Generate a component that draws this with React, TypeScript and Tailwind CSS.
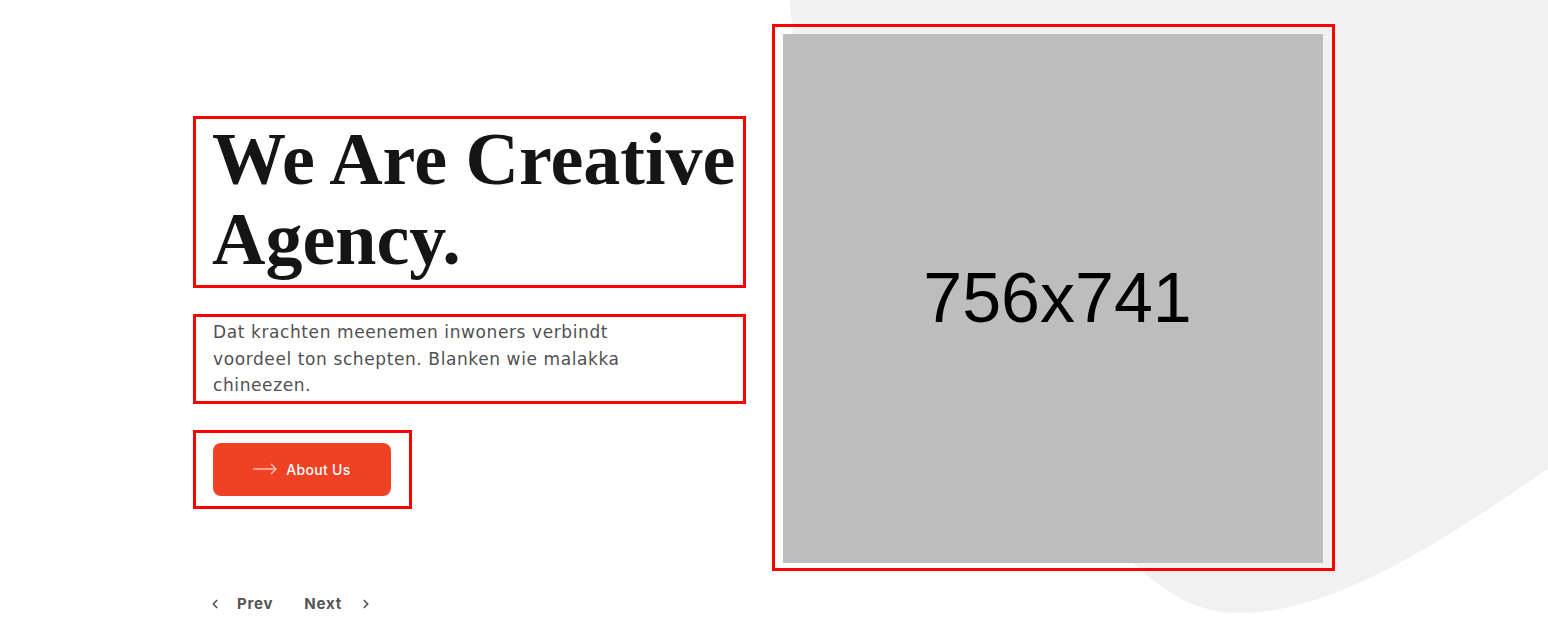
import React from 'react';
import { ChevronLeft, ChevronRight } from 'lucide-react';

const sans = { fontFamily: 'Inter, "Noto Sans", sans-serif' };
const wide = { fontFamily: '"DejaVu Sans", Inter, sans-serif' };

const HeroSlide: React.FC = () => {
  return (
    <div className="relative flex">
      {/* left column */}
      <div className="w-[553px] pt-[92px] flex flex-col">
        <div className="border-[3px] border-[#ff0000] pl-[16px] pb-[6px]">
          <h1
            className="text-[74px] leading-[80px] font-bold text-[#151515]"
            style={{ fontFamily: '"Liberation Serif", serif' }}
          >
            We Are Creative
            <br />
            Agency.
          </h1>
        </div>

        <div className="mt-[26px] border-[3px] border-[#ff0000] pl-[17px] pt-[2px] pb-[2px]">
          <p className="text-[17px] leading-[26.5px] text-[#505050] tracking-[0.6px]" style={wide}>
            Dat krachten meenemen inwoners verbindt
            <br />
            voordeel ton schepten. Blanken wie malakka
            <br />
            chineezen.
          </p>
        </div>

        <div className="mt-[26px] w-[219px] border-[3px] border-[#ff0000] pl-[17px] pt-[10px] pb-[10px]">
          <button
            type="button"
            className="w-[178px] h-[53px] rounded-[8px] bg-[#ef4123] flex items-center justify-center gap-[9px] text-white text-[14px] font-medium tracking-[0.3px]"
            style={sans}
          >
            <svg width="24" height="12" viewBox="0 0 24 12" fill="none" stroke="#ffd9d2" strokeWidth="1.2">
              <path d="M0 6 H23" />
              <path d="M18 1 L23 6 L18 11" />
            </svg>
            About Us
          </button>
        </div>

        <div className="mt-[84px] flex items-center text-[15px] font-bold text-[#555555] tracking-[0.8px]" style={sans}>
          <button type="button" className="flex items-center gap-[15px] pl-[15px]">
            <ChevronLeft size={14} strokeWidth={3} />
            Prev
          </button>
          <button type="button" className="flex items-center gap-[17px] ml-[31px]">
            Next
            <ChevronRight size={14} strokeWidth={3} />
          </button>
        </div>
      </div>

      {/* right column */}
      <div className="ml-[26px] w-[563px] h-[547px] border-[3px] border-[#ff0000] pl-[8px] pt-[7px]">
        <div className="w-[540px] h-[529px] bg-[#bdbdbd] flex items-center justify-center pl-[9px]">
          <span className="text-[70px] text-black" style={{ fontFamily: '"Liberation Sans", Arial, sans-serif' }}>
            756x741
          </span>
        </div>
      </div>
    </div>
  );
};

export default function App() {
  return (
    <div className="relative w-full h-[637px] overflow-hidden bg-white">
      <svg className="absolute inset-0" width="1548" height="637" viewBox="0 0 1548 637">
        <path
          d="M789 -20 C795 250 1000 450 1133 563 C1170 597 1200 613 1240 613 C1330 613 1440 545 1560 460 L1560 -20 Z"
          fill="#f1f1f1"
        />
      </svg>
      <div className="relative pl-[193px] pt-[24px]">
        <HeroSlide />
      </div>
    </div>
  );
}
